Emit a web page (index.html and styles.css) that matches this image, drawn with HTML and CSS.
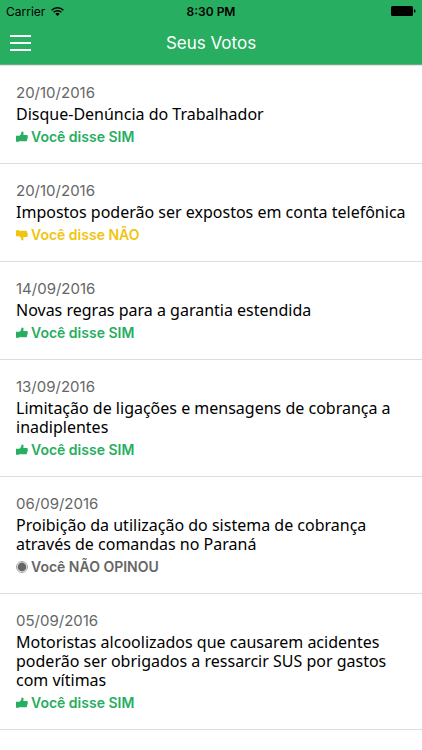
FILE: index.html
```html
<!DOCTYPE html>
<html lang="pt-BR">
<head>
    <meta charset="UTF-8">
    <meta name="viewport" content="width=device-width, initial-scale=1.0">
    <title>Seus Votos</title>
    <link rel="stylesheet" href="styles.css">
</head>

<body>
    <!-- Shared icons -->
    <svg class="icon-defs" aria-hidden="true">
        <symbol id="thumb" viewBox="0 0 12 12">
            <path d="M0 4.8h3.2C4.6 4.2 5.3 3 5.4 1.2c.1-1 1.9-1 2.1.2.2 1 0 1.8-.3 2.7h3.5c1.2 0 1.3 1.1.9 1.6.4.5.2 1.2-.2 1.5.2.6 0 1.2-.4 1.5.1.9-.4 1.6-1.3 1.6H5.4c-.8 0-1.3-.3-1.9-.5v.9H0z"/>
        </symbol>
        <symbol id="circle" viewBox="0 0 12 12">
            <circle cx="6" cy="6" r="4.4"/>
            <circle cx="6" cy="6" r="5.5" fill="none" stroke="currentColor" stroke-width="0.6"/>
        </symbol>
    </svg>

    <header id="header">
        <div class="status-bar">
            <div class="carrier">
                <span>Carrier</span>
                <svg class="wifi" viewBox="0 0 13 9" aria-hidden="true">
                    <path d="M0.6 3.2a8.4 8.4 0 0 1 11.8 0M2.6 5.3a5.5 5.5 0 0 1 7.8 0" fill="none" stroke="currentColor" stroke-width="1.5"/>
                    <path d="M6.5 9L4.3 6.8a3.1 3.1 0 0 1 4.4 0z"/>
                </svg>
            </div>
            <div class="time">8:30 PM</div>
            <div class="power">
                <svg class="battery" viewBox="0 0 25 10" aria-hidden="true">
                    <rect width="22" height="10" rx="1.5"/>
                    <path d="M23 3.2c2 .3 2 3.3 0 3.6z"/>
                </svg>
            </div>
        </div>
        <div class="nav-bar">
            <button class="menu" type="button" aria-label="Menu">
                <span></span>
                <span></span>
                <span></span>
            </button>
            <h1>Seus Votos</h1>
        </div>
    </header>

    <main>
        <ul class="votes">
            <li class="vote">
                <p class="date">20/10/2016</p>
                <h2>Disque-Denúncia do Trabalhador</h2>
                <p class="answer yes"><svg><use href="#thumb"/></svg>Você disse SIM</p>
            </li>
            <li class="vote">
                <p class="date">20/10/2016</p>
                <h2>Impostos poderão ser expostos em conta telefônica</h2>
                <p class="answer no"><svg><use href="#thumb"/></svg>Você disse NÃO</p>
            </li>
            <li class="vote">
                <p class="date">14/09/2016</p>
                <h2>Novas regras para a garantia estendida</h2>
                <p class="answer yes"><svg><use href="#thumb"/></svg>Você disse SIM</p>
            </li>
            <li class="vote">
                <p class="date">13/09/2016</p>
                <h2>Limitação de ligações e mensagens de cobrança a inadiplentes</h2>
                <p class="answer yes"><svg><use href="#thumb"/></svg>Você disse SIM</p>
            </li>
            <li class="vote">
                <p class="date">06/09/2016</p>
                <h2>Proibição da utilização do sistema de cobrança através de comandas no Paraná</h2>
                <p class="answer none"><svg><use href="#circle"/></svg>Você NÃO OPINOU</p>
            </li>
            <li class="vote">
                <p class="date">05/09/2016</p>
                <h2>Motoristas alcoolizados que causarem acidentes poderão ser obrigados a ressarcir SUS por gastos com vítimas</h2>
                <p class="answer yes"><svg><use href="#thumb"/></svg>Você disse SIM</p>
            </li>
        </ul>
    </main>
</body>

</html>
```
FILE: styles.css
```css
/* General Styles */
body, h1, h2, p, ul {
    margin: 0;
    padding: 0;
}

body {
    font-family: Inter, "Liberation Sans", sans-serif;
    background: #ffffff;
    color: #000000;
}

svg {
    fill: currentColor;
}

.icon-defs {
    display: none;
}

/* Header Styles */
#header {
    background: #27ae60;
    border-bottom: 1px solid #6fa989;
    box-shadow: 0 1px 0 #d4efdf;
}

/* Status Bar */
.status-bar {
    display: grid;
    grid-template-columns: 1fr auto 1fr;
    align-items: center;
    height: 22px;
    padding: 0 6px;
    font-size: 12px;
}

.carrier {
    display: flex;
    align-items: center;
    gap: 6px;
}

.wifi {
    width: 13px;
    height: 9px;
}

.time {
    font-size: 12px;
    font-weight: 600;
}

.power {
    display: flex;
    justify-content: flex-end;
}

.battery {
    width: 25px;
    height: 10px;
}

/* Title Bar */
.nav-bar {
    display: grid;
    grid-template-columns: 1fr auto 1fr;
    align-items: center;
    height: 42px;
    padding: 0 10px;
    color: #ffffff;
}

.nav-bar h1 {
    font-size: 17px;
    font-weight: 400;
}

.menu {
    display: flex;
    flex-direction: column;
    justify-self: start;
    gap: 5px;
    width: 21px;
    padding: 0;
    border: 0;
    background: none;
    cursor: pointer;
}

.menu span {
    width: 100%;
    height: 2px;
    background: #ffffff;
}

/* Votes List */
.votes {
    padding-top: 1px;
    list-style: none;
}

.vote {
    padding: 17px 16px 16px;
    border-bottom: 1px solid #dddddd;
}

.date {
    font-size: 15px;
    line-height: 20px;
    color: #666666;
}

.vote h2 {
    margin: 2px 0 3px;
    font-family: "Noto Sans", "Liberation Sans", sans-serif;
    font-size: 16px;
    font-weight: 400;
    line-height: 19px;
}

.answer {
    display: flex;
    align-items: center;
    gap: 3px;
    font-size: 14px;
    font-weight: 600;
    line-height: 20px;
}

.answer svg {
    width: 12px;
    height: 12px;
}

.yes {
    color: #27ae60;
}

.no {
    color: #f1c40f;
}

.no svg {
    transform: scaleY(-1);
}

.none {
    color: #666666;
}
```
